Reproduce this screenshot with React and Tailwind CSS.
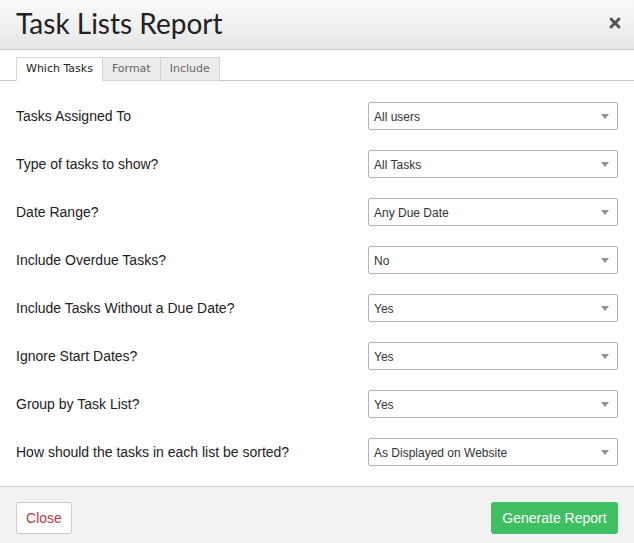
import React, { useState } from 'react';
import { FaTimes } from 'react-icons/fa';

const rows = [
  ['Tasks Assigned To', 'All users'],
  ['Type of tasks to show?', 'All Tasks'],
  ['Date Range?', 'Any Due Date'],
  ['Include Overdue Tasks?', 'No'],
  ['Include Tasks Without a Due Date?', 'Yes'],
  ['Ignore Start Dates?', 'Yes'],
  ['Group by Task List?', 'Yes'],
  ['How should the tasks in each list be sorted?', 'As Displayed on Website'],
];

const tabs = ['Which Tasks', 'Format', 'Include'];

const SelectBox = ({ value }) => (
  <div className="w-[250px] h-[28px] border border-[#b4b4b4] rounded-[2px] bg-white flex items-center justify-between pl-[5px] pr-[8px] text-[12px] text-[#333]">
    <span className="pt-[1px]">{value}</span>
    <svg width="8" height="5" viewBox="0 0 8 5">
      <path d="M0 0 L8 0 L4 5 Z" fill="#909090" />
    </svg>
  </div>
);

export default function App() {
  const [active, setActive] = useState(0);

  return (
    <div className="w-[634px] h-[543px] flex flex-col bg-white font-['Liberation_Sans',Arial,sans-serif]">
      {/* header */}
      <div className="h-[50px] shrink-0 flex items-center justify-between pl-4 pr-[11px] border-b border-[#c9c9c9] bg-gradient-to-b from-[#fafafa] to-[#e6e6e6]">
        <h1 className="text-[28px] text-[#222] font-['Lato',sans-serif] leading-none pb-[3px]">Task Lists Report</h1>
        <FaTimes className="text-[#555] w-[16px] h-[16px] mb-[3px]" />
      </div>

      {/* tabs */}
      <div className="pt-[7px] px-4 border-b border-[#c9c9c9] flex shrink-0">
        {tabs.map((t, i) => (
          <button
            key={t}
            onClick={() => setActive(i)}
            className={
              'h-[24px] px-[9px] text-[11px] font-["DejaVu_Sans",Verdana,sans-serif] border border-[#d4d4d4] -mb-px ' +
              (i === active
                ? 'bg-white text-[#222] border-b-white'
                : 'bg-[#ececec] text-[#666] border-l-0')
            }
          >
            {t}
          </button>
        ))}
      </div>

      {/* form */}
      <div className="flex-1 pt-[11px] px-4">
        {rows.map(([label, value]) => (
          <div key={label} className="h-[48px] flex items-center justify-between">
            <span className="text-[14px] text-[#222]">{label}</span>
            <SelectBox value={value} />
          </div>
        ))}
      </div>

      {/* footer */}
      <div className="h-[57px] shrink-0 border-t border-[#d0d0d0] bg-[#f2f2f2] flex items-start justify-between px-4 pt-[15px]">
        <button className="h-[32px] w-[56px] bg-white border border-[#cccccc] rounded-[3px] text-[14px] text-[#c0393b]">
          Close
        </button>
        <button className="h-[32px] w-[127px] bg-[#3dbf62] rounded-[3px] text-[14px] text-white font-medium">
          Generate Report
        </button>
      </div>
    </div>
  );
}
